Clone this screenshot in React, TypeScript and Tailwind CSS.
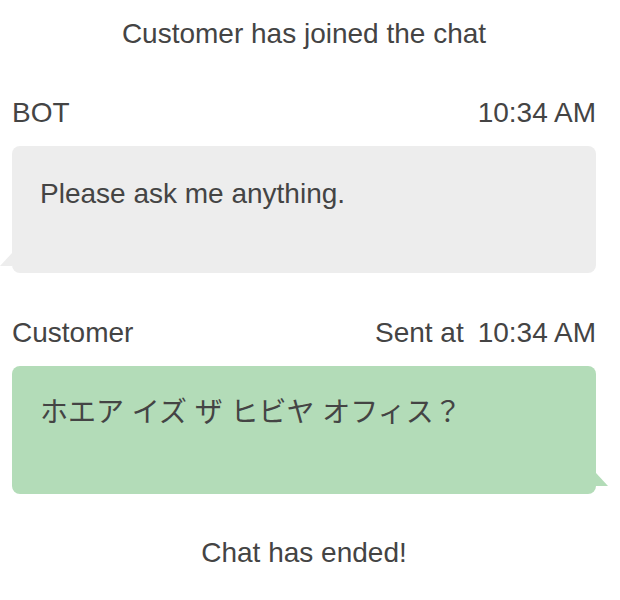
export default function App() {
  return (
    <div className="w-[620px] h-[600px] bg-white text-[#444444] text-[28px] leading-[32px] font-['Liberation_Sans','Noto_Sans_CJK_JP',sans-serif] pl-[12px] pr-[24px] pt-[18px]">
      <p className="text-center">Customer has joined the chat</p>

      <div className="mt-[47px] flex justify-between">
        <span>BOT</span>
        <span>10:34 AM</span>
      </div>
      <div className="relative mt-[17px] h-[127px] rounded-[8px] bg-[#ededed] px-[28px] pt-[32px]">
        Please ask me anything.
        <svg className="absolute left-[-12px] bottom-[7px]" width="12" height="13" viewBox="0 0 12 13">
          <polygon points="12,0 0,13 12,13" fill="#ededed" />
        </svg>
      </div>

      <div className="mt-[44px] flex justify-between">
        <span>Customer</span>
        <span className="flex gap-[14px]">
          <span>Sent at</span>
          <span>10:34 AM</span>
        </span>
      </div>
      <div className="relative mt-[17px] h-[128px] rounded-[8px] bg-[#b3dcb8] px-[28px] pt-[31px]">
        ホエア イズ ザ ヒビヤ オフィス？
        <svg className="absolute right-[-12px] bottom-[8px]" width="12" height="13" viewBox="0 0 12 13">
          <polygon points="0,0 12,13 0,13" fill="#b3dcb8" />
        </svg>
      </div>

      <p className="mt-[43px] text-center">Chat has ended!</p>
    </div>
  );
}
